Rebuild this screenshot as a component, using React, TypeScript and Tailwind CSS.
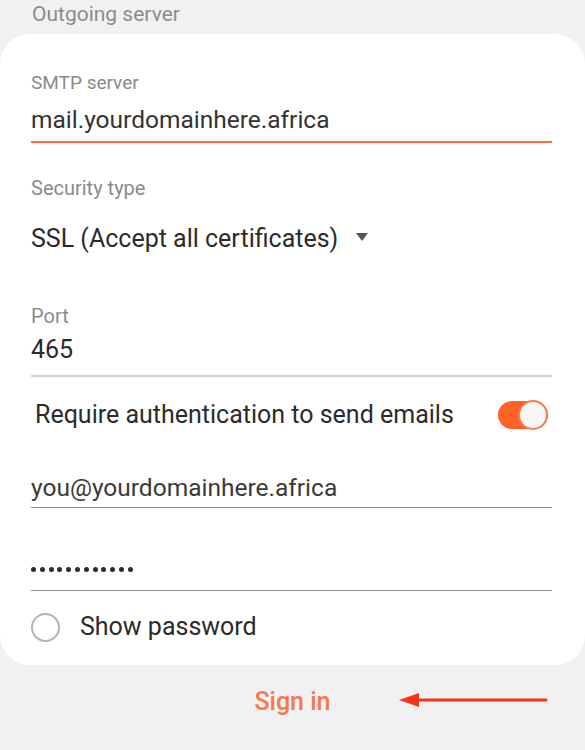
import React from "react";

const dots = Array.from({ length: 12 });

export default function App() {
  return (
    <div
      className="w-[585px] h-[750px] bg-[#f1f1f1] overflow-hidden"
      style={{ fontFamily: "Roboto, 'Liberation Sans', sans-serif" }}
    >
      <div className="h-[34px] pl-[32px] text-[21px] leading-[28px] text-[#8c8c8c]">
        Outgoing server
      </div>

      <div className="bg-white rounded-[30px] h-[631px] px-[31px] pt-[37px]">
        <div className="text-[19px] leading-[24px] text-[#8a8a8a]">SMTP server</div>
        <div className="mt-[10px] text-[24.5px] leading-[30px] text-[#333] border-b-2 border-[#ff6a3d] pb-[6px] w-[521px]">
          mail.yourdomainhere.africa
        </div>

        <div className="mt-[33px] text-[20px] leading-[24px] text-[#8a8a8a]">Security type</div>
        <div className="mt-[24px] flex items-center text-[25px] leading-[30px] text-[#2b2b2b]">
          SSL (Accept all certificates)
          <svg width="14" height="10" viewBox="0 0 14 10" className="ml-[17px] -mt-[4px]">
            <path d="M1 1h12L7 9z" fill="#555" />
          </svg>
        </div>

        <div className="mt-[50px] text-[20px] leading-[24px] text-[#8a8a8a]">Port</div>
        <div className="mt-[7px] text-[25px] leading-[30px] text-[#2b2b2b] border-b-2 border-[#cfcfcf] pb-[10px] w-[521px]">
          465
        </div>

        <div className="mt-[23px] flex items-center justify-between w-[521px]">
          <span className="pl-[4px] text-[25px] leading-[30px] text-[#2b2b2b]">
            Require authentication to send emails
          </span>
          <div className="relative w-[50px] h-[30px] mr-[4px]">
            <div className="w-[50px] h-[28px] mt-[1px] rounded-full bg-[#ff6126]" />
            <div className="absolute right-0 top-0 w-[30px] h-[30px] rounded-full bg-[#f7f7f7] border-2 border-[#ff7a4a]" />
          </div>
        </div>

        <div className="mt-[43px] text-[24.5px] leading-[30px] text-[#3a3a3a] border-b border-[#8f8f8f] pb-[4px] w-[521px]">
          you@yourdomainhere.africa
        </div>

        <div className="mt-[46px] h-[30px] flex items-center gap-[3.8px] border-b border-[#8f8f8f] box-content pb-[6px] w-[521px]">
          {dots.map((_, i) => (
            <span key={i} className="w-[5px] h-[5px] rounded-full bg-[#2b2b2b]" />
          ))}
        </div>

        <div className="mt-[21px] flex items-center h-[30px]">
          <div className="w-[29px] h-[29px] rounded-full border-2 border-[#b4b4b4]" />
          <span className="ml-[20px] text-[25px] leading-[30px] text-[#2b2b2b]">Show password</span>
        </div>
      </div>

      <div className="relative h-[74px] flex items-center justify-center">
        <span className="text-[25px] font-medium text-[#f7794d]">Sign in</span>
        <svg
          className="absolute left-[398px] top-[27px]"
          width="150"
          height="16"
          viewBox="0 0 150 16"
        >
          <path d="M18 8H148" stroke="#f2351b" strokeWidth="3" strokeLinecap="round" />
          <path d="M1 8L21 1V15z" fill="#f2351b" />
        </svg>
      </div>
    </div>
  );
}
